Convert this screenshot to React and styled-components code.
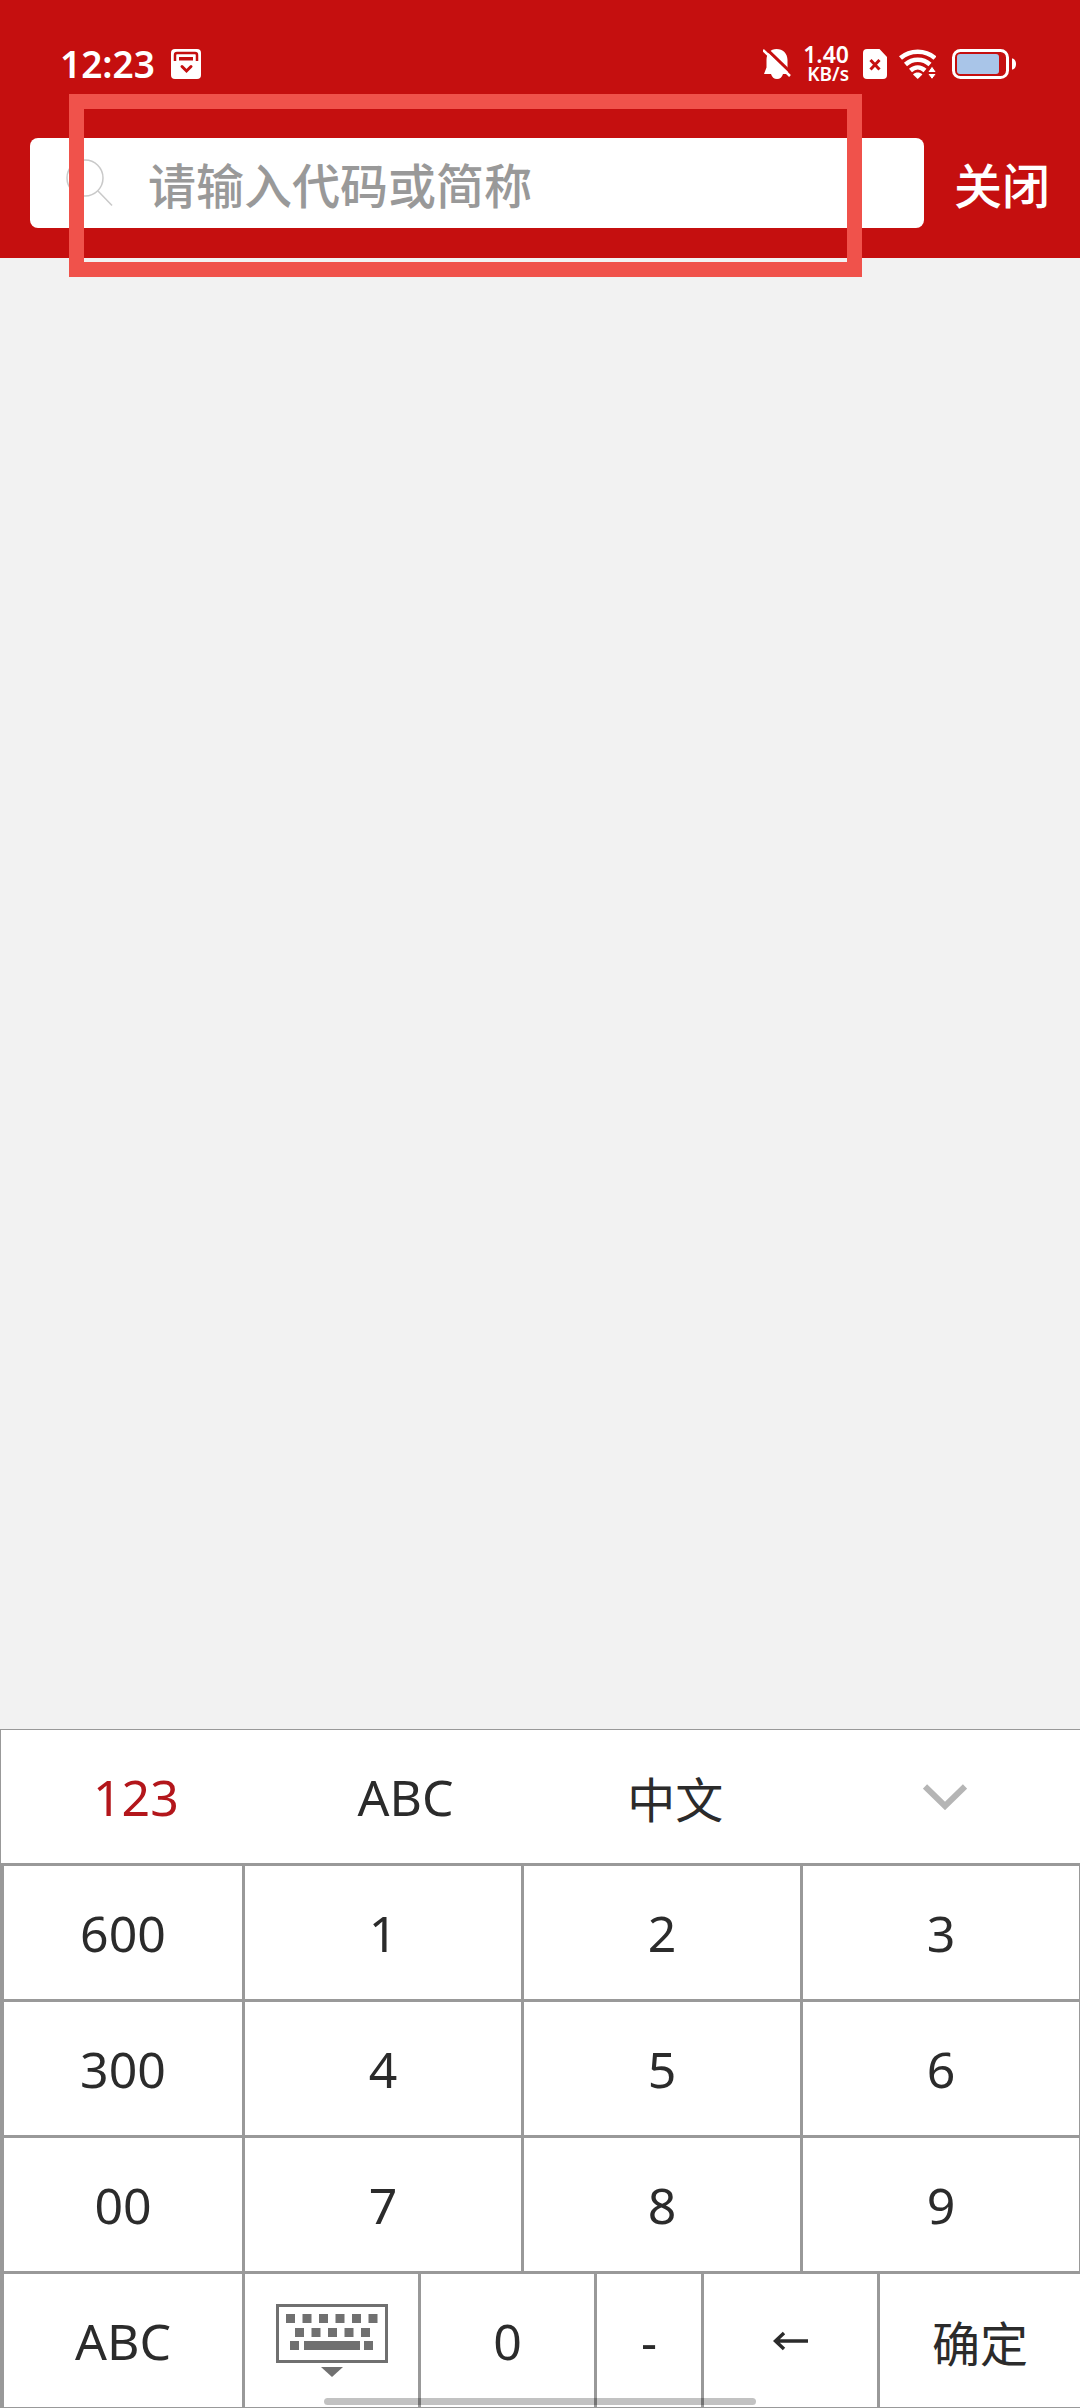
import React, { useState } from "react";
import styled, { createGlobalStyle } from "styled-components";

const TABS = ["123", "ABC", "中文"];

const NUMBER_KEYS = [
  ["600", "1", "2", "3"],
  ["300", "4", "5", "6"],
  ["00", "7", "8", "9"],
];

const CalendarIcon = () => (
  <svg width="30" height="30" viewBox="0 0 30 30" aria-hidden="true">
    <rect width="30" height="30" rx="4" fill="#fff" />
    <path
      d="M4 12V6a2 2 0 0 1 2-2h18a2 2 0 0 1 2 2v6"
      fill="none"
      stroke="#c50f0f"
      strokeWidth="2.500"
    />
    <path d="M8 8h14v3.500H8z" fill="#c50f0f" />
    <path
      d="M11 17.500l4.500 4.500L20 17.500"
      fill="none"
      stroke="#c50f0f"
      strokeWidth="3"
      strokeLinecap="round"
    />
  </svg>
);

const BellOffIcon = () => (
  <svg width="28" height="30" viewBox="0 0 28 30" aria-hidden="true">
    <path
      d="M13.500 0C20 0 24.500 4.500 24.500 11v7l2.500 7H1l2.500-6.500V11C3.500 4.500 7.500 0 13.500 0z"
      fill="#fff"
    />
    <path d="M8 25h12c-.8 3-3 5-6 5s-5.200-2-6-5z" fill="#fff" />
    <path d="M2-1.500l28 27" stroke="#c50f0f" strokeWidth="3" />
    <path d="M19 30l8-3V20z" fill="#c50f0f" />
    <path d="M0 1l27 26" stroke="#fff" strokeWidth="2.500" />
  </svg>
);

const SimIcon = () => (
  <svg width="24" height="30" viewBox="0 0 24 30" aria-hidden="true">
    <path
      d="M4 0h12.500L24 8v18a4 4 0 0 1-4 4H4a4 4 0 0 1-4-4V4a4 4 0 0 1 4-4z"
      fill="#fff"
    />
    <path d="M7.500 11l9 9.500m0-9.500l-9 9.500" stroke="#c50f0f" strokeWidth="3" />
  </svg>
);

const WifiIcon = () => (
  <svg width="37" height="30" viewBox="0 0 37 30" aria-hidden="true">
    <g fill="none" stroke="#fff" strokeWidth="4.500">
      <path d="M1.500 9C11 .5 26.500.5 36 9" />
      <path d="M6.500 15.500c7-6.500 17.500-6.500 24.500 0" />
      <path d="M11.500 21.500c4.500-4 10-4 14.500 0" />
    </g>
    <path d="M18.700 30l-4.700-4.500c2.600-2.600 6.800-2.600 9.400 0z" fill="#fff" />
    <path
      d="M28.500 23.500l4.500-6.500 4.500 6.500zM28.500 24.500h9l-4.500 6z"
      fill="#fff"
      stroke="#c50f0f"
    />
  </svg>
);

const BatteryIcon = () => (
  <svg width="64" height="30" viewBox="0 0 64 30" aria-hidden="true">
    <rect
      x="1.500"
      y="1.500"
      width="54"
      height="27"
      rx="7"
      fill="none"
      stroke="#fff"
      strokeWidth="3"
    />
    <rect x="5" y="5" width="42" height="20" rx="3" fill="#a9c5e8" />
    <path d="M60 9.500c2.500 0 4 2.500 4 5.500s-1.500 5.500-4 5.500z" fill="#fff" />
  </svg>
);

const SearchIcon = () => (
  <svg width="48" height="48" viewBox="0 0 48 48" aria-hidden="true">
    <g fill="none" stroke="#c9c9c9" strokeWidth="1.500">
      <circle cx="19" cy="19" r="18" />
      <path d="M32 32l14 14.500" />
    </g>
  </svg>
);

const ChevronIcon = () => (
  <svg width="44" height="26" viewBox="0 0 44 26" aria-hidden="true">
    <path
      d="M2 2.500l20 19.500L42 2.500"
      fill="none"
      stroke="#b5b5b5"
      strokeWidth="6"
    />
  </svg>
);

const KeyboardIcon = () => (
  <svg width="112" height="73" viewBox="0 0 112 73" aria-hidden="true">
    <rect
      x="1.500"
      y="1.500"
      width="109"
      height="56"
      fill="none"
      stroke="#707070"
      strokeWidth="3"
    />
    <g fill="#707070">
      {[10, 26.5, 43, 59.5, 76, 92.5].map((x) => (
        <rect key={x} x={x} y="10" width="9" height="9" />
      ))}
      {[19, 35.5, 52, 68.5, 85].map((x) => (
        <rect key={x} x={x} y="24" width="9" height="9" />
      ))}
      <rect x="14" y="37" width="9" height="9" />
      <rect x="28" y="37" width="56" height="9" />
      <rect x="88" y="37" width="9" height="9" />
      <path d="M45 63h22L56 73z" />
    </g>
  </svg>
);

const ArrowLeftIcon = () => (
  <svg width="36" height="20" viewBox="0 0 36 20" aria-hidden="true">
    <path
      d="M35 10H3M11 2l-8.500 8L11 18"
      fill="none"
      stroke="#2b2b2b"
      strokeWidth="3.500"
    />
  </svg>
);

export default function App() {
  const [keyword, setKeyword] = useState("");
  const [activeTab, setActiveTab] = useState("123");

  const handlePress = (value) => setKeyword((prev) => prev + value);

  return (
    <PageStyle>
      <GlobalStyle />
      <HeaderStyle>
        <StatusBarStyle>
          <div className="status__group">
            <span className="status__time">12:23</span>
            <CalendarIcon />
          </div>
          <div className="status__group">
            <BellOffIcon />
            <div className="status__speed">
              <span>1.40</span>
              <small>KB/s</small>
            </div>
            <SimIcon />
            <WifiIcon />
            <div className="status__battery">
              <BatteryIcon />
            </div>
          </div>
        </StatusBarStyle>
        <SearchRowStyle>
          <SearchBoxStyle>
            <SearchIcon />
            <input
              type="text"
              aria-label="请输入代码或简称"
              placeholder="请输入代码或简称"
              value={keyword}
              onChange={(e) => setKeyword(e.target.value)}
            />
          </SearchBoxStyle>
          <CloseButton type="button" onClick={() => setKeyword("")}>
            关闭
          </CloseButton>
        </SearchRowStyle>
        <HighlightStyle />
      </HeaderStyle>
      <ResultStyle />
      <KeyboardStyle>
        <TabRowStyle>
          {TABS.map((tab) => (
            <TabButton
              key={tab}
              type="button"
              $active={tab === activeTab}
              $chinese={tab === "中文"}
              onClick={() => setActiveTab(tab)}
            >
              {tab}
            </TabButton>
          ))}
          <TabButton type="button" aria-label="收起">
            <ChevronIcon />
          </TabButton>
        </TabRowStyle>
        <NumberGridStyle>
          {NUMBER_KEYS.flat().map((value) => (
            <KeyButton
              key={value}
              type="button"
              onClick={() => handlePress(value)}
            >
              {value}
            </KeyButton>
          ))}
        </NumberGridStyle>
        <BottomRowStyle>
          <KeyButton type="button">ABC</KeyButton>
          <KeyButton type="button" aria-label="键盘">
            <KeyboardIcon />
          </KeyButton>
          <KeyButton type="button" onClick={() => handlePress("0")}>
            0
          </KeyButton>
          <KeyButton type="button" onClick={() => handlePress("-")}>
            -
          </KeyButton>
          <KeyButton
            type="button"
            aria-label="删除"
            onClick={() => setKeyword((prev) => prev.slice(0, -1))}
          >
            <ArrowLeftIcon />
          </KeyButton>
          <KeyButton type="button" $chinese>
            确定
          </KeyButton>
        </BottomRowStyle>
        <HomeIndicator />
      </KeyboardStyle>
    </PageStyle>
  );
}

const latinFont = `"Noto Sans", "Noto Sans CJK SC", sans-serif`;
const chineseFont = `"Noto Sans CJK SC", "Noto Sans", sans-serif`;

const GlobalStyle = createGlobalStyle`
  * {
    box-sizing: border-box;
  }

  body {
    margin: 0;
    font-family: ${latinFont};
  }

  button {
    border: none;
    padding: 0;
    cursor: pointer;
  }

  svg {
    display: block;
    flex: none;
  }
`;

const PageStyle = styled.div`
  display: flex;
  flex-direction: column;
  min-height: 100vh;
  background: #f2f2f2;
`;

const HeaderStyle = styled.header`
  position: relative;
  padding: 40px 30px 30px;
  background: #c50f0f;
`;

const StatusBarStyle = styled.div`
  display: flex;
  justify-content: space-between;
  align-items: center;
  height: 48px;
  margin-bottom: 50px;
  padding: 0 34px 0 30px;
  color: #fff;

  .status {
    &__group {
      display: flex;
      align-items: center;
      gap: 12px;
    }

    &__time {
      margin-right: 4px;
      font-size: 37px;
      font-weight: 600;
      line-height: 48px;
    }

    &__speed {
      display: flex;
      flex-direction: column;
      align-items: flex-end;
      margin-right: 2px;
      font-size: 23px;
      font-weight: 600;
      line-height: 20px;

      small {
        font-size: 19px;
        line-height: 20px;
      }
    }

    &__battery {
      margin-left: 4px;
    }
  }
`;

const SearchRowStyle = styled.div`
  display: flex;
  align-items: center;
  gap: 30px;
`;

const SearchBoxStyle = styled.label`
  display: flex;
  flex: 1;
  align-items: center;
  gap: 34px;
  min-width: 0;
  height: 90px;
  padding: 0 36px;
  background: #fff;
  border-radius: 8px;

  input {
    flex: 1;
    min-width: 0;
    height: 72px;
    padding: 0;
    border: none;
    outline: none;
    background: transparent;
    color: #2b2b2b;
    font-family: ${chineseFont};
    font-size: 48px;
    font-weight: 500;

    &::placeholder {
      color: #999;
      opacity: 1;
    }
  }
`;

const CloseButton = styled.button`
  background: transparent;
  color: #fff;
  font-family: ${chineseFont};
  font-size: 48px;
  font-weight: 500;
  line-height: 72px;
`;

/* guide frame over the search box */
const HighlightStyle = styled.div`
  position: absolute;
  top: 94px;
  right: 218px;
  bottom: -19px;
  left: 69px;
  border: 15px solid #f0524b;
  pointer-events: none;
`;

const ResultStyle = styled.main`
  flex: 1;
`;

const KeyboardStyle = styled.section`
  position: relative;
  background: #999;
  border-bottom: 1px solid #999;
`;

const TabRowStyle = styled.div`
  display: grid;
  grid-template-columns: repeat(4, 1fr);
  border-top: 1px solid #999;
  border-left: 1px solid #999;
`;

const KeyButton = styled.button`
  display: grid;
  place-items: center;
  height: 133px;
  background: #fff;
  color: #2b2b2b;
  font-family: ${({ $chinese }) => ($chinese ? chineseFont : latinFont)};
  font-size: ${({ $chinese }) => ($chinese ? 48 : 50)}px;
  line-height: 72px;
`;

const TabButton = styled(KeyButton)`
  color: ${({ $active }) => ($active ? "#b3161b" : "#2b2b2b")};
`;

const NumberGridStyle = styled.div`
  display: grid;
  grid-template-columns: 238fr repeat(3, 276fr);
  gap: 3px;
  padding: 3px 1px 3px 4px;
`;

const BottomRowStyle = styled.div`
  display: grid;
  grid-template-columns: 238fr 173fr 173fr 104fr 173fr 200fr;
  gap: 3px;
  padding-left: 4px;
`;

const HomeIndicator = styled.div`
  position: absolute;
  bottom: 2px;
  left: 30%;
  width: 40%;
  height: 7px;
  border-radius: 4px;
  background: rgba(0, 0, 0, 0.24);
  pointer-events: none;
`;
